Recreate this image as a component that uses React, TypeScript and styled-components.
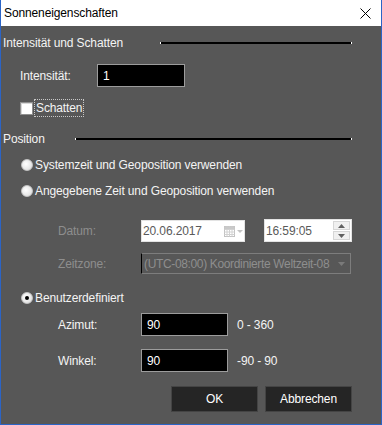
import React from 'react'
import styled, { createGlobalStyle } from 'styled-components'

const GlobalStyle = createGlobalStyle`
	body {
		margin: 0;
		background: #ffffff;
	}
`

const Window = styled.div`
	width: 382px;
	height: 425px;
	box-sizing: border-box;
	background: #575757;
	border: 1px solid #2b64c6;
	border-top: none;
	display: flex;
	flex-direction: column;
	font-family: "Liberation Sans", Arial, sans-serif;
	font-size: 12px;
	letter-spacing: -0.12px;
	color: #f4f4f4;
`
const TitleBar = styled.div`
	height: 26px;
	flex: none;
	background: #ffffff;
	color: #000000;
	display: flex;
	align-items: center;
	justify-content: space-between;
	padding: 0 10px 0 3px;
	font-size: 12px;
`
const Content = styled.div`
	display: flex;
	flex-direction: column;
	padding: 0 29px 0 2px;
`
const SectionHeader = styled.div<{ $top: number }>`
	display: flex;
	align-items: center;
	height: 16px;
	margin-top: ${({ $top }) => $top}px;
`
const HeaderLabel = styled.div<{ $width: number }>`
	width: ${({ $width }) => $width}px;
	flex: none;
`
const Rule = styled.div`
	flex: 1;
	height: 2px;
	background: #000000;
	border-left: 1px solid #ffffff;
	border-right: 1px solid #ffffff;
`
const Row = styled.div<{ $top: number, $height: number, $indent: number }>`
	display: flex;
	align-items: center;
	height: ${({ $height }) => $height}px;
	margin-top: ${({ $top }) => $top}px;
	padding-left: ${({ $indent }) => $indent}px;
`
const Label = styled.div<{ $width: number, $disabled?: boolean }>`
	width: ${({ $width }) => $width}px;
	flex: none;
	color: ${({ $disabled }) => $disabled ? '#8e8e8e' : '#f4f4f4'};
`
const DarkInput = styled.div<{ $width: number }>`
	width: ${({ $width }) => $width}px;
	height: 23px;
	box-sizing: border-box;
	background: #000000;
	border: 1px solid #9c9c9c;
	color: #ffffff;
	display: flex;
	align-items: center;
	padding-left: 5px;
	flex: none;
`
const Hint = styled.div`
	margin-left: 9px;
`
const CheckBox = styled.div`
	width: 13px;
	height: 13px;
	box-sizing: border-box;
	border: 1px solid #8f8f8f;
	background: #ffffff;
	box-shadow: inset 1px 1px 0 #d8d8d8;
	flex: none;
`
const FocusLabel = styled.div`
	margin-left: 1px;
	padding: 1px 1px;
	border: 1px dotted #c8c8c8;
`
const RadioDot = styled.div<{ $checked?: boolean }>`
	width: 12px;
	height: 12px;
	box-sizing: border-box;
	border-radius: 50%;
	border: 1px solid #c4c4c4;
	background: radial-gradient(circle at 40% 40%, #ffffff 0%, #e4e4e4 70%);
	display: flex;
	align-items: center;
	justify-content: center;
	flex: none;
	margin-right: 2px;
	&::after {
		content: '';
		width: 4px;
		height: 4px;
		border-radius: 50%;
		background: #000000;
		display: ${({ $checked }) => $checked ? 'block' : 'none'};
	}
`
const WhiteField = styled.div<{ $width: number, $height: number, $gap?: number }>`
	width: ${({ $width }) => $width}px;
	height: ${({ $height }) => $height}px;
	margin-left: ${({ $gap }) => $gap ?? 0}px;
	box-sizing: border-box;
	background: #ffffff;
	border: 1px solid #e3e3e3;
	color: #5a5a5a;
	display: flex;
	align-items: center;
	padding-left: 1px;
	flex: none;
`
const FieldText = styled.div`
	flex: 1;
`
const Spinner = styled.div`
	width: 17px;
	height: 19px;
	margin-right: 1px;
	display: flex;
	flex-direction: column;
	gap: 1px;
`
const SpinButton = styled.div`
	flex: 1;
	border: 1px solid #d6d6d6;
	background: #f0f0f0;
	display: flex;
	align-items: center;
	justify-content: center;
`
const Combo = styled.div`
	width: 210px;
	height: 21px;
	box-sizing: border-box;
	border: 1px solid #7d7d7d;
	border-left: 1px solid #000000;
	color: #8e8e8e;
	display: flex;
	align-items: center;
	padding: 0 5px 0 2px;
	white-space: nowrap;
`
const ComboText = styled.div`
	flex: 1;
	letter-spacing: -0.35px;
`
const ButtonRow = styled.div`
	display: flex;
	justify-content: flex-end;
	gap: 7px;
	margin-top: 14px;
`
const Button = styled.div`
	width: 87px;
	height: 26px;
	box-sizing: border-box;
	background: #252525;
	border: 1px solid #444444;
	color: #ffffff;
	display: flex;
	align-items: center;
	justify-content: center;
`

const CloseIcon = () => (
	<svg width="11" height="11" viewBox="0 0 11 11">
		<path d="M0.5 0.5 L10.5 10.5 M10.5 0.5 L0.5 10.5" stroke="#000" strokeWidth="1" />
	</svg>
)

const CalendarIcon = () => (
	<svg width="20" height="12" viewBox="0 0 20 12">
		<rect x="0.5" y="1.5" width="10" height="10" fill="#fff" stroke="#c2c2c2" />
		<path d="M0.5 4.5 H10.5 M0.5 7 H10.5 M0.5 9.5 H10.5 M3 1.5 V11.5 M5.5 1.5 V11.5 M8 1.5 V11.5" stroke="#d2d2d2" />
		<rect x="0.5" y="1.5" width="10" height="2.5" fill="#c9c9c9" />
		<path d="M13 5 H19 L16 8 Z" fill="#c3c3c3" />
	</svg>
)

const Arrow = ({ up, color }: { up?: boolean, color: string }) => (
	<svg width="7" height="4" viewBox="0 0 7 4">
		<path d={up ? 'M0 4 H7 L3.5 0 Z' : 'M0 0 H7 L3.5 4 Z'} fill={color} />
	</svg>
)

const App = () => (
	<>
		<GlobalStyle />
		<Window>
			<TitleBar>
				<span>Sonneneigenschaften</span>
				<CloseIcon />
			</TitleBar>
			<Content>
				<SectionHeader $top={9}>
					<HeaderLabel $width={157}>Intensität und Schatten</HeaderLabel>
					<Rule />
				</SectionHeader>
				<Row $top={13} $height={23} $indent={17}>
					<Label $width={77}>Intensität:</Label>
					<DarkInput $width={88}>1</DarkInput>
				</Row>
				<Row $top={13} $height={16} $indent={17}>
					<CheckBox />
					<FocusLabel>Schatten</FocusLabel>
				</Row>
				<SectionHeader $top={15}>
					<HeaderLabel $width={72}>Position</HeaderLabel>
					<Rule />
				</SectionHeader>
				<Row $top={10} $height={16} $indent={18}>
					<RadioDot />
					Systemzeit und Geoposition verwenden
				</Row>
				<Row $top={10} $height={16} $indent={18}>
					<RadioDot />
					Angegebene Zeit und Geoposition verwenden
				</Row>
				<Row $top={20} $height={23} $indent={55}>
					<Label $width={83} $disabled>Datum:</Label>
					<WhiteField $width={104} $height={22}>
						<FieldText>20.06.2017</FieldText>
						<CalendarIcon />
					</WhiteField>
					<WhiteField $width={88} $height={23} $gap={19}>
						<FieldText>16:59:05</FieldText>
						<Spinner>
							<SpinButton><Arrow up color="#606060" /></SpinButton>
							<SpinButton><Arrow color="#606060" /></SpinButton>
						</Spinner>
					</WhiteField>
				</Row>
				<Row $top={11} $height={21} $indent={55}>
					<Label $width={83} $disabled>Zeitzone:</Label>
					<Combo>
						<ComboText>(UTC-08:00) Koordinierte Weltzeit-08</ComboText>
						<Arrow color="#7a7a7a" />
					</Combo>
				</Row>
				<Row $top={16} $height={16} $indent={18}>
					<RadioDot $checked />
					Benutzerdefiniert
				</Row>
				<Row $top={7} $height={23} $indent={55}>
					<Label $width={83}>Azimut:</Label>
					<DarkInput $width={87}>90</DarkInput>
					<Hint>0 - 360</Hint>
				</Row>
				<Row $top={13} $height={23} $indent={55}>
					<Label $width={83}>Winkel:</Label>
					<DarkInput $width={87}>90</DarkInput>
					<Hint>-90 - 90</Hint>
				</Row>
				<ButtonRow>
					<Button>OK</Button>
					<Button>Abbrechen</Button>
				</ButtonRow>
			</Content>
		</Window>
	</>
)

export default App
